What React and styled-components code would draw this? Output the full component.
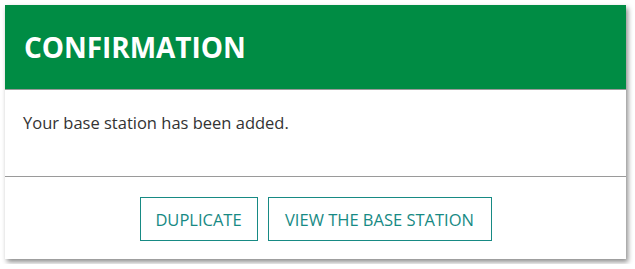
import React from "react";
import styled, { createGlobalStyle } from "styled-components";

const Global = createGlobalStyle`
  html, body { margin: 0; padding: 0; background: #ffffff; }
  body { font-family: "Open Sans", "Noto Sans", sans-serif; }
`;

const Page = styled.div`
  padding: 5px;
`;

const Dialog = styled.div`
  width: 621px;
  height: 254px;
  box-sizing: border-box;
  background: #ffffff;
  box-shadow: 2px 3px 5px rgba(0, 0, 0, 0.45);
  display: flex;
  flex-direction: column;
`;

const Header = styled.div`
  height: 84px;
  background: #008c44;
  border-bottom: 1px solid #9a9a9a;
  display: flex;
  align-items: center;
  padding: 0 19px;
`;

const Title = styled.h1`
  margin: 0;
  color: #ffffff;
  font-size: 28px;
  font-weight: 700;
  letter-spacing: -0.05px;
`;

const Body = styled.div`
  height: 87px;
  border-bottom: 1px solid #9a9a9a;
  padding: 21px 18px 0;
  box-sizing: border-box;
  color: #333333;
  font-size: 16.5px;
`;

const Footer = styled.div`
  flex: 1;
  display: flex;
  justify-content: center;
  align-items: flex-start;
  gap: 10px;
  padding-top: 20px;
`;

const Button = styled.button`
  width: ${(p) => p.$w}px;
  height: 44px;
  padding: 0;
  background: #ffffff;
  border: 1px solid #178a84;
  color: #178a84;
  font-family: "Open Sans", "Noto Sans", sans-serif;
  font-size: 16.5px;
  cursor: pointer;
`;

export default function App() {
  return (
    <>
      <Global />
      <Page>
        <Dialog>
          <Header>
            <Title>CONFIRMATION</Title>
          </Header>
          <Body>Your base station has been added.</Body>
          <Footer>
            <Button $w={118}>DUPLICATE</Button>
            <Button $w={224}>VIEW THE BASE STATION</Button>
          </Footer>
        </Dialog>
      </Page>
    </>
  );
}
